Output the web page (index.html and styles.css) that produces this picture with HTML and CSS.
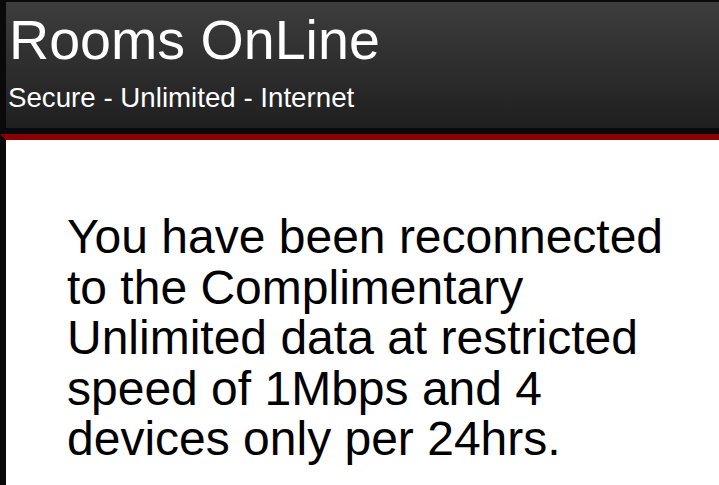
FILE: index.html
```html
<!DOCTYPE html>
<html>
<head>
<meta charset="utf-8">
<link rel="stylesheet" href="styles.css">
</head>
<body>
<div class="page">
  <header class="header">
    <h1 class="title">Rooms OnLine</h1>
    <p class="subtitle">Secure - Unlimited - Internet</p>
  </header>
  <div class="rule"></div>
  <main class="content">
    <p class="message">You have been reconnected to the Complimentary Unlimited data at restricted speed of 1Mbps and 4 devices only per 24hrs.</p>
  </main>
</div>
</body>
</html>
```
FILE: styles.css
```css
html, body {
  margin: 0;
  padding: 0;
  background: #0a0a0a;
  font-family: "Liberation Sans", Arial, sans-serif;
  height: 100%;
  overflow: hidden;
}
.page {
  display: flex;
  flex-direction: column;
  height: 100%;
}
.header {
  margin: 2px 0 0 6px;
  height: 126px;
  flex: none;
  box-sizing: border-box;
  padding: 11px 0 0 3px;
  background: linear-gradient(to bottom, #3d3d3d, #1f1f1f);
  color: #fff;
}
.title {
  margin: 0;
  font-weight: normal;
  font-size: 55.6px;
  line-height: 55px;
}
.subtitle {
  margin: 14px 0 0 -1px;
  font-size: 27.7px;
  line-height: 32px;
}
.rule {
  flex: none;
  height: 6px;
  margin-top: 6px;
  background: #8b0000;
  clip-path: polygon(0 0, 100% 0, 100% 100%, 6px 100%);
}
.content {
  flex: 1;
  margin-left: 6px;
  background: #fff;
  padding: 72px 20px 0 61px;
}
.message {
  margin: 0;
  color: #000;
  font-size: 48px;
  line-height: 50.5px;
}
```
